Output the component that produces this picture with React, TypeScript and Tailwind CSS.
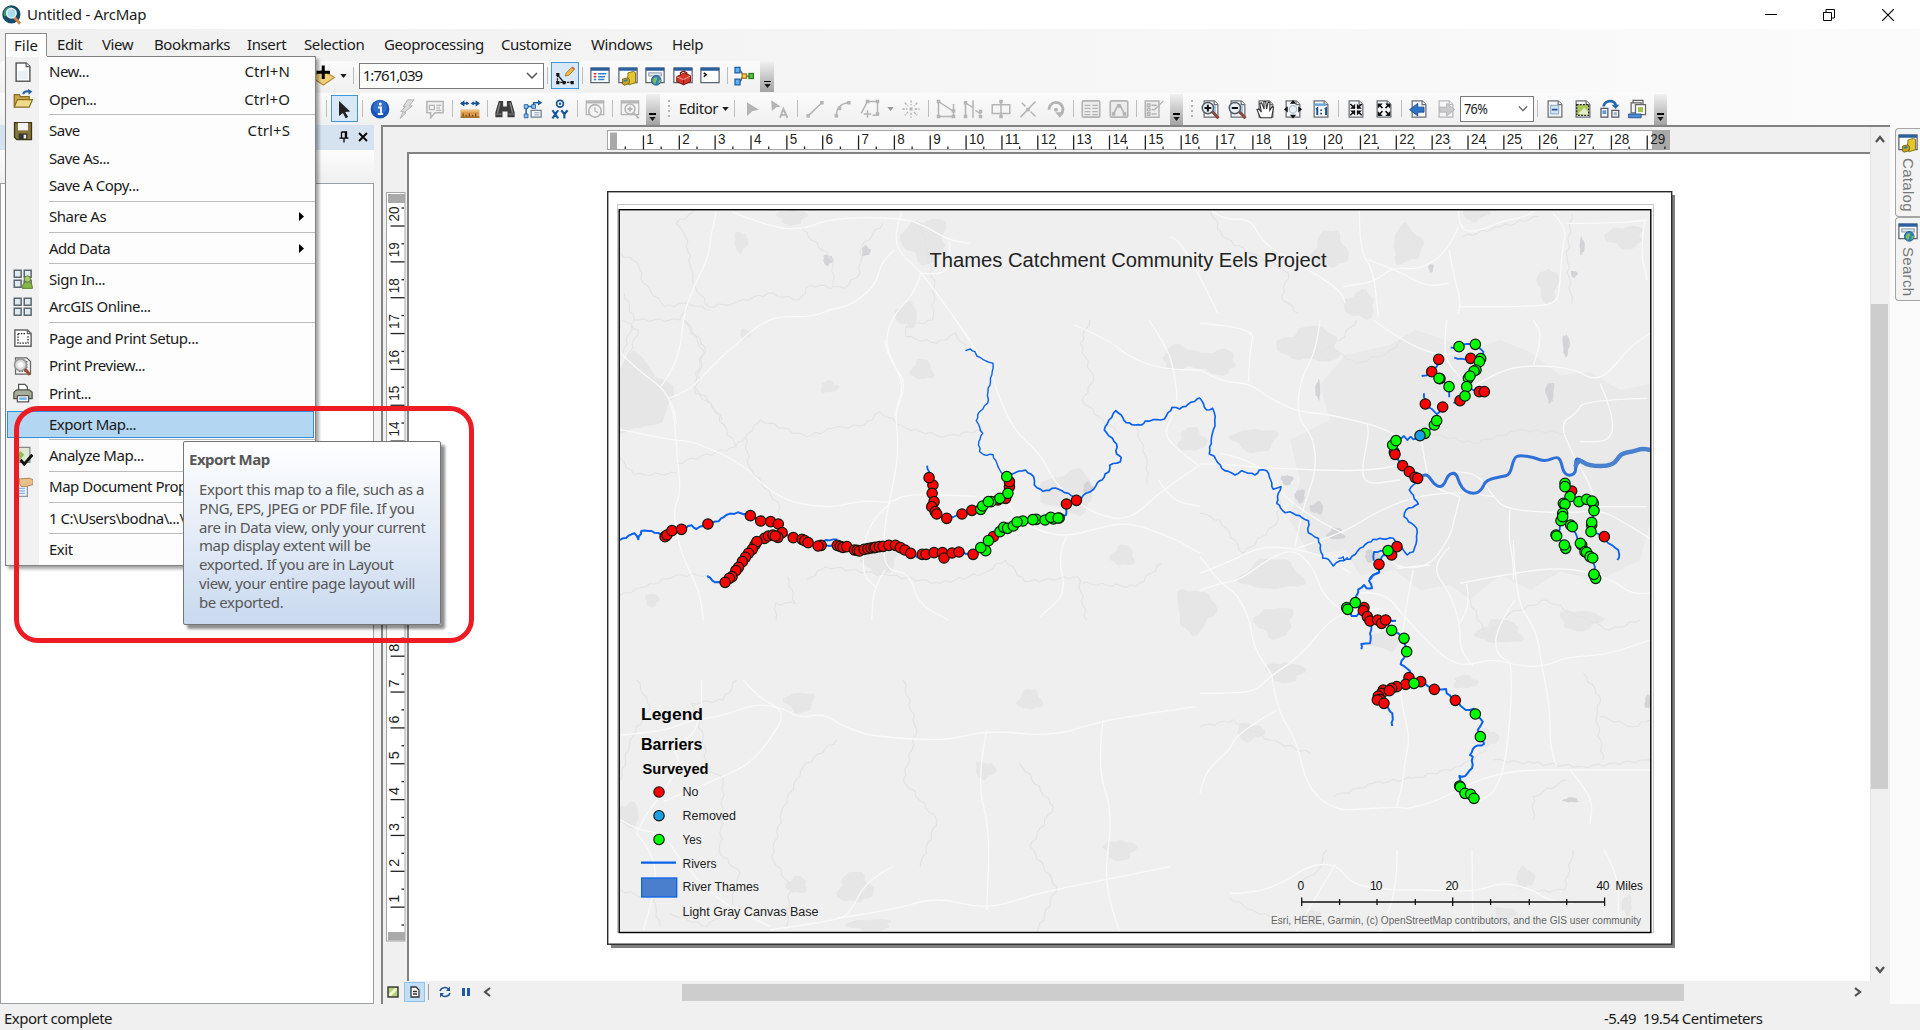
import React from "react";

type Kids = { children?: React.ReactNode };

/* ---------- small drawing helpers ---------- */

function Ic({ children, className = "" }: Kids & { className?: string }) {
  return (
    <svg viewBox="0 0 16 16" className={"h-5 w-5 shrink-0 " + className} fill="none" stroke="none">
      {children}
    </svg>
  );
}
const Slot = ({ children }: Kids) => <div className="flex h-7 w-[27.5px] shrink-0 items-center justify-center">{children}</div>;
const Hot = ({ children }: Kids) => (
  <div className="flex h-[27px] w-[27.5px] shrink-0 items-center justify-center border border-[#3f97dc] bg-[#d9e8f6]">{children}</div>
);
const Sep = () => (
  <div className="flex w-[7.7px] shrink-0 justify-center">
    <div className="h-[17px] w-px bg-[#bdbdbd]" />
  </div>
);
const Caret = ({ className = "" }: { className?: string }) => (
  <svg viewBox="0 0 8 5" className={"h-1 w-[7px] shrink-0 " + className}>
    <path d="M0 0h8L4 5z" fill="currentColor" />
  </svg>
);
const Chevron = ({ className = "" }: { className?: string }) => (
  <svg viewBox="0 0 12 7" className={"h-[7px] w-3 " + className} fill="none" stroke="#555" strokeWidth="1.500">
    <path d="M1 1l5 5 5-5" />
  </svg>
);
const Overflow = () => (
  <div className="ml-[2px] flex h-[31px] w-[13.5px] shrink-0 flex-col items-center justify-end self-end bg-linear-to-b from-[#f1f1f1] to-[#a3a3a3] pb-1">
    <div className="mb-[2px] h-[1.5px] w-[7px] bg-black" />
    <Caret />
  </div>
);
const Grip = () => (
  <div className="flex flex-col gap-[3px]">
    {[0, 1, 2, 3].map((i) => (
      <div key={i} className="h-[2px] w-[2px] bg-[#b5b5b5]" />
    ))}
  </div>
);

/* ---------- icons ---------- */

const Win = ({ children }: Kids) => (
  <>
    <rect x=".7" y="1.7" width="14.6" height="11.6" fill="#fff" stroke="#5c6470" />
    <rect x=".7" y="1.2" width="14.6" height="2.6" fill="#2c5f9e" />
    {children}
  </>
);
const Sheet = ({ children, faded = false }: Kids & { faded?: boolean }) => (
  <g opacity={faded ? 0.45 : 1}>
    <path d="M2.500 1.500h8l3 3v10h-11z" fill="#f4f6f8" stroke="#6b6f75" />
    <path d="M10.500 1.500v3h3" fill="#fff" stroke="#6b6f75" />
    {children}
  </g>
);
const G = "#b4b4b4";

const IAdd = () => (
  <Ic className="h-6 w-6">
    <path d="M0 9l7-5 8 5-7.500 5z" fill="#efcf7c" stroke="#b58c34" strokeWidth=".7" />
    <path d="M7.500 1v9M3 5.500h9" stroke="#000" strokeWidth="2" />
  </Ic>
);
const ISketch = () => (
  <Ic>
    <path d="M2 7v6h12" stroke="#222" strokeDasharray="2 .7" />
    <path d="M2 7l5 6" stroke="#222" />
    <path d="M1 5.500h2.500v2.500H1zM1 12h2.500v2.500H1zM6 12h2.500v2.500H6zM12.500 12H15v2.500h-2.500z" fill="#111" />
    <path d="M8 8l1-2.500L13.500 1l2 1.700L11 7.500z" fill="#f0b93f" stroke="#9a6a1c" strokeWidth=".6" />
    <path d="M13 1.500L14 .3l2 1.500-1 1.400z" fill="#d2695b" />
  </Ic>
);
const IToc = () => (
  <Ic>
    <Win>
      <path d="M3 6.200h2M3 8.500h2" stroke="#c33" strokeWidth="1.300" />
      <path d="M3 10.800h2" stroke="#2a8bd0" strokeWidth="1.300" />
      <path d="M6.500 6.200h6.500M6.500 8.500H12M6.500 10.800h5" stroke="#2f7fd0" strokeWidth="1.200" />
    </Win>
  </Ic>
);
const ICatalog = () => (
  <Ic>
    <Win />
    <path d="M8 5.500l4.500-1.200 1.500 1v8L9 15l-1.500-1z" fill="#e6c62e" stroke="#7b690d" strokeWidth=".7" />
    <path d="M3.500 10.500l4-1 1.500 1V14l-4 1.300-1.500-1z" fill="#c9aa1e" stroke="#6c5a08" strokeWidth=".7" />
    <path d="M4.500 12l3-.8" stroke="#3e7d9a" strokeWidth="1.500" />
  </Ic>
);
const ISearch = () => (
  <Ic>
    <Win>
      <rect x="3" y="5.500" width="10" height="2.500" fill="#dce7f4" stroke="#7b8ca3" strokeWidth=".7" />
    </Win>
    <circle cx="9" cy="11.500" r="3.900" fill="#2e83bb" stroke="#1b4c78" strokeWidth=".6" />
    <path d="M6.500 10.500c2-2.500 4-1.500 3 .2s-.5 3-1.500 3.500c-1.500-.8-2-2.200-1.500-3.700zM10.800 11.500l1.600-.8v2.200l-1.600 1z" fill="#7cc25a" />
  </Ic>
);
const IToolbox = () => (
  <Ic>
    <Win />
    <path d="M3 8.500l6-3 5 2.200v4.800L8.500 15 3 12.500z" fill="#d3362b" stroke="#7c130e" strokeWidth=".8" />
    <path d="M3 8.700l5.500 2.200L14 8" stroke="#f4a196" strokeWidth=".8" />
    <path d="M6 7V5.300l2.500-1.100L11 5.300v1.500" stroke="#7c130e" />
    <path d="M8.500 11v4" stroke="#7c130e" strokeWidth=".7" />
  </Ic>
);
const IPython = () => (
  <Ic>
    <Win>
      <path d="M3 5.500l2 1.500-2 1.500" stroke="#111" strokeWidth="1.200" />
    </Win>
  </Ic>
);
const IModel = () => (
  <Ic>
    <path d="M5 3.500l2.500 4L5 12.500M9 8h4" stroke="#555" />
    <path d="M.8 1h4v4.500h-4zM.8 10.500h4V15h-4z" fill="#5fb0f0" stroke="#1b5fa8" />
    <rect x="6.500" y="6.300" width="3.500" height="3.500" fill="#f3cf55" stroke="#9b7a17" />
    <rect x="12" y="6" width="3.500" height="4" fill="#5fc24c" stroke="#24791c" />
  </Ic>
);
const IPointer = ({ c = "#222" }: { c?: string }) => (
  <Ic>
    <path d="M4 1.500l9 8.500-4 .3 2.300 4-2 1-2.200-4.200L4 13.500z" fill={c} />
  </Ic>
);
const IInfo = () => (
  <Ic>
    <circle cx="8" cy="8" r="7.500" fill="#1b55b4" />
    <circle cx="8" cy="6.500" r="5.500" fill="#3b78cf" opacity=".7" />
    <path d="M6.500 6.800h2.300v4.700M6.200 12h4.300" stroke="#fff" strokeWidth="1.500" />
    <circle cx="8.200" cy="3.900" r="1.200" fill="#fff" />
  </Ic>
);
const IBolt = () => (
  <Ic>
    <path d="M8.500.7h5L9.800 5.500h2.400L5.500 11h1.700L2.500 15.500 5 10H3l3.700-4H5z" fill="#dcdcdc" stroke={G} strokeWidth=".8" />
  </Ic>
);
const ICallout = () => (
  <Ic>
    <path d="M1.500 2h13v9H8l-3.500 4v-4h-3z" fill="#f3f3f3" stroke={G} strokeWidth="1.200" />
    <path d="M3.500 5h4v3.500h-4zM9 5h4M9 7h3M9 9h4" stroke={G} />
  </Ic>
);
const IMeasure = () => (
  <Ic>
    <path d="M1 3.500h5.500M9.500 3.500H15" stroke="#17508f" strokeWidth="1.500" />
    <path d="M0 3.500L3.500 1v5zM16 3.500L12.500 1v5zM7.500 3.500L5 2v3zM8.500 3.500L11 2v3z" fill="#17508f" />
    <rect x=".5" y="8.500" width="15" height="6.500" fill="#d99b4d" />
    <path d="M.5 14.500h15" stroke="#8f5a1c" />
    <path d="M2.500 14v-2.500M5 14v-1.500M7.500 14v-2.500M10 14v-1.500M12.500 14v-2.500" stroke="#7a4a12" />
    <path d="M.5 9.500h15" stroke="#f2cd92" />
  </Ic>
);
const IBino = () => (
  <Ic>
    <path d="M3 1.500h3.500V6h3V1.500H13l2.700 9v4H10V10H6v4.500H.3v-4z" fill="#3c3c3c" />
    <path d="M4 3l-2 8M12 3l2 8" stroke="#8a8a8a" />
    <path d="M.8 12h4.500M10.700 12h4.500" stroke="#777" />
  </Ic>
);
const IRoute = () => (
  <Ic>
    <path d="M2.500 13V6h6V3h4" stroke="#1e5f9f" strokeWidth="1.200" />
    <path d="M12 .8L15.500 3 12 5.200z" fill="#1e5f9f" />
    <path d="M1 4.500h3v3H1zM1 12h3v3H1zM7 4.500h3v3H7z" fill="#8cc4ee" stroke="#1e5f9f" strokeWidth=".7" />
    <path d="M6.500 9h8v5.500h-8z" fill="#f5f7fa" stroke="#6e7f92" />
    <path d="M9 11h4M9 12.700h4" stroke="#8ea3ba" strokeWidth=".8" />
  </Ic>
);
const IXY = () => (
  <Ic>
    <circle cx="8" cy="3.700" r="2.700" stroke="#16559b" strokeWidth="1.400" fill="#fff" />
    <circle cx="8" cy="3.700" r="1" fill="#16559b" />
    <path d="M2 9l4.500 6.500M6.500 9L2 15.500M9 9l2.500 3.200L14 9M11.500 12v3.500" stroke="#16559b" strokeWidth="1.700" />
  </Ic>
);
const IGWin = ({ children }: Kids) => (
  <Ic>
    <path d="M1 1.500h14v11H1z" fill="#f4f4f4" stroke={G} />
    <path d="M1 2.700h14" stroke={G} strokeWidth="1.800" />
    {children}
  </Ic>
);
const ITime = () => (
  <IGWin>
    <circle cx="8" cy="9.500" r="5" fill="#f4f4f4" stroke={G} strokeWidth="1.300" />
    <path d="M8 6.500v3.200l2.500 1.200" stroke={G} />
  </IGWin>
);
const IViewer = () => (
  <IGWin>
    <circle cx="8" cy="8" r="4" fill="#f4f4f4" stroke={G} strokeWidth="1.200" />
    <path d="M8 6v4M6 8h4M11 11l4 4.500" stroke={G} strokeWidth="1.500" />
  </IGWin>
);
const INode = ({ d, pts }: { d: string; pts: number[][] }) => (
  <Ic>
    <path d={d} stroke={G} strokeWidth="1.200" />
    {pts.map(([x, y], i) => (
      <rect key={i} x={x - 1.4} y={y - 1.4} width="2.800" height="2.800" fill={G} />
    ))}
  </Ic>
);
const IArrowA = () => (
  <Ic>
    <path d="M1 1l7.500 5-3.500.5L1.500 9.500z" fill={G} />
    <path d="M8 15l2.700-7L14 15M9 12.700h4" stroke={G} strokeWidth="1.500" />
  </Ic>
);
const IStar = () => (
  <Ic>
    <path d="M8 1v4M8 11v4M1 8h4M11 8h4M3 3l2.700 2.700M10.300 10.300L13 13M13 3l-2.700 2.700M5.700 10.300L3 13" stroke={G} strokeDasharray="2 1" strokeWidth="1.100" />
    <rect x="6.800" y="6.800" width="2.400" height="2.400" fill={G} />
  </Ic>
);
const IRotate = () => (
  <Ic>
    <path d="M2.500 8.500a5.500 5.500 0 1 1 9 4" stroke={G} strokeWidth="2.200" />
    <path d="M7.500 10.500l7 0-3.500 4.500z" fill={G} />
    <circle cx="8" cy="8.500" r="1.600" fill={G} />
  </Ic>
);
const ITable = () => (
  <Ic>
    <rect x="1" y="1.500" width="14" height="13" rx="1" fill="#ededed" stroke={G} strokeWidth="1.300" />
    <path d="M3 5h4.500M3 7.500h4.500M3 10h4.500M3 12.500h4.500M9 5h4.500M9 7.500h4.500M9 10h4.500M9 12.500h4.500" stroke={G} />
  </Ic>
);
const IGraphBox = () => (
  <Ic>
    <rect x="1" y="1.500" width="14" height="13" rx="1" fill="#ededed" stroke={G} strokeWidth="1.300" />
    <path d="M3.500 12L7 5.500h2l3.500 6.500" stroke={G} strokeWidth="1.300" />
    <path d="M6.500 4h3v3h-3zM2.300 10.500h2.800v2.800H2.300zM11 10.500h2.800v2.800H11z" fill={G} />
  </Ic>
);
const IForm = () => (
  <Ic>
    <path d="M1 1.500h11v13H1z" fill="#ededed" stroke={G} strokeWidth="1.200" />
    <path d="M2.700 4h2v2h-2zM2.700 7.500h2v2h-2zM2.700 11h2v2h-2zM6 5h4M6 8.500h2.500M6 12h4M8 9l7.500-7.500" stroke={G} strokeWidth="1.100" />
  </Ic>
);
const ILens = ({ minus = false }: { minus?: boolean }) => (
  <Ic>
    <Sheet>
      <path d="M8 5h4v7H8z" fill="#a9cbe8" />
    </Sheet>
    <path d="M9 10l5 5.500" stroke="#8c4a3a" strokeWidth="2.400" />
    <circle cx="5.500" cy="7.200" r="4.500" fill="#e8eef3" stroke="#555b63" strokeWidth="1.200" />
    <path d={minus ? "M3 7.200h5" : "M2.800 7.200h5.400M5.500 4.500v5.400"} stroke="#111" strokeWidth="1.600" />
  </Ic>
);
const IHand = () => (
  <Ic>
    <Sheet />
    <path d="M3.500 15L.8 8.500l1.500-.5 2 2.500L3 3.500l1.500-.4L6.500 8 6.300 2h1.500L8.500 8l1.200-5.500 1.500.3L11 9l2-3 1 .6-1.500 8.400z" fill="#fff" stroke="#333" strokeWidth=".9" />
  </Ic>
);
const IExtent = () => (
  <Ic>
    <Sheet />
    <circle cx="8" cy="8.200" r="3" fill="#eaf1f7" stroke="#b9c4cf" />
    <path d="M8 .8l2.500 3h-5zM8 15.500l2.500-3h-5zM.8 8.200l3-2.500v5zM15.200 8.200l-3-2.500v5z" fill="#111" />
  </Ic>
);
const IOne = () => (
  <Ic>
    <Sheet />
    <path d="M3 4.500h9" stroke="#6ea6d8" strokeWidth="2" />
    <path d="M4 8.200l1-.7v5.300M11 8.200l1-.7v5.300" stroke="#174f86" strokeWidth="1.500" />
    <path d="M7.400 9h1.400M7.400 11.700h1.400" stroke="#174f86" strokeWidth="1.300" />
  </Ic>
);
const IFixed = ({ out = false }: { out?: boolean }) => (
  <Ic>
    <Sheet />
    {out ? (
      <>
        <path d="M4 4.500l2.800 2.800M12 4.500L9.200 7.300M4 12.500l2.800-2.800M12 12.500L9.200 9.700" stroke="#111" strokeWidth="1.200" />
        <path d="M3 3.500h4L3 7.500zM13 3.500v4l-4-4zM3 13.500v-4l4 4zM13 13.500H9l4-4z" fill="#111" />
      </>
    ) : (
      <>
        <path d="M3.500 4l3.500 3.500M12.500 4L9 7.500M3.500 13L7 9.500M12.500 13L9 9.500" stroke="#111" strokeWidth="1.200" />
        <path d="M7.300 7.800v-4l-4 4zM8.700 7.800h4l-4-4zM7.300 9.200h-4l4 4zM8.700 9.200v4l4-4z" fill="#111" />
      </>
    )}
  </Ic>
);
const IBack = () => (
  <Ic>
    <Sheet />
    <path d="M.5 8.500L7 3.500v3h5v4H7v3z" fill="#2f73c9" stroke="#184b93" strokeWidth=".7" />
  </Ic>
);
const IFwd = () => (
  <Ic>
    <Sheet faded />
    <path d="M15 8.500L8.500 3.500v3H3v4h5.500v3z" fill="#c9c9c9" stroke="#b0b0b0" strokeWidth=".7" />
  </Ic>
);
const IDraft = () => (
  <Ic>
    <Sheet>
      <path d="M4.500 5h6.500v7H4.500z" fill="#cfe0f0" stroke="#7fa3c5" strokeWidth=".7" />
      <path d="M5.500 8.500h4.500" stroke="#1e4f8a" strokeWidth="1.300" />
    </Sheet>
  </Ic>
);
const IFocus = () => (
  <Ic>
    <Sheet>
      <rect x="3" y="4.500" width="9.500" height="8.500" fill="#a9c85b" stroke="#222" strokeDasharray="1.500 1" />
      <path d="M4 12l5-5 3 3v2.500z" fill="#e7edca" />
    </Sheet>
  </Ic>
);
const ILayoutSwap = () => (
  <Ic>
    <path d="M3 6C3 1 12 0 12.500 5" stroke="#2268ae" strokeWidth="2.200" />
    <path d="M9.300 4.500h6.200L12.500 8z" fill="#2268ae" />
    <path d="M.8 7.500h5.500v7H.8zM9.500 9h5.500v5.500H9.500z" fill="#f4f6f8" stroke="#556" />
    <path d="M2 9h3v3H2z" fill="#5c9fd8" />
    <path d="M11 10.500h2.500V13H11z" fill="#9bb" />
  </Ic>
);
const IPages = () => (
  <Ic>
    <path d="M4 1h8v8H4z" fill="#eee" stroke="#666" />
    <path d="M2.500 3h8v8h-8z" fill="#f5f5f5" stroke="#666" />
    <path d="M6 4.500h8v8H6z" fill="#fff" stroke="#666" />
    <path d="M8 6.500h4v4H8z" fill="#9fc14e" />
    <path d="M.5 12h10v3H.5z" fill="#4b8ed4" stroke="#1d4f8e" strokeWidth=".7" />
  </Ic>
);

/* menu icons */
const MNew = () => (
  <Ic>
    <path d="M2.500.7h8l3 3v11.600h-11z" fill="#fff" stroke="#5e5e5e" strokeWidth="1.200" />
    <path d="M10.500.7v3h3" stroke="#5e5e5e" fill="#eef" />
    <path d="M4 7h8v7H4z" fill="#e9f0f7" />
  </Ic>
);
const MOpen = () => (
  <Ic>
    <path d="M1 14V4.500h4l1 1.500h7v3" fill="#c9a84a" stroke="#8a6d1f" />
    <path d="M1 14.500l2.500-6H15.500L13 14.500z" fill="#f0db8d" stroke="#8a6d1f" />
    <path d="M8 4c1-2 3-2.500 5-2" stroke="#2263a8" strokeWidth="1.500" />
    <path d="M12 0l3.500 2-3 2.500z" fill="#2263a8" />
  </Ic>
);
const MSave = () => (
  <Ic>
    <path d="M1.200 1.200h13.600v13.600H3L1.200 13z" fill="#85763a" stroke="#3d3515" />
    <path d="M4 1.500h8v6H4z" fill="#f3f3f3" />
    <path d="M4.500 10h7v4.500h-7z" fill="#333" />
    <path d="M8.500 11h2v3h-2z" fill="#eee" />
  </Ic>
);
const Tiles = () => (
  <path d="M1 1h5.500v5.500H1zM9 1h5.500v5.500H9zM1 9h5.500v5.500H1zM9 9h5.500v5.500H9z" fill="#dfe9f0" stroke="#5d6770" strokeWidth="1.200" />
);
const MSign = () => (
  <Ic>
    <Tiles />
    <path d="M7.500 15.500c0-4 1.500-5 4-5s4 1 4 5z" fill="#86b548" stroke="#54792a" strokeWidth=".7" />
    <circle cx="11.500" cy="8" r="2.500" fill="#a9cf68" stroke="#54792a" strokeWidth=".7" />
  </Ic>
);
const MOnline = () => (
  <Ic>
    <Tiles />
  </Ic>
);
const MPage = () => (
  <Ic>
    <path d="M1.500 1.500h10l3 3v10h-13z" fill="#fff" stroke="#666" strokeWidth="1.200" />
    <path d="M11.500 1.500v3h3" stroke="#666" />
    <path d="M4 4.500h6.500M4 4.500v7.500h8V6" stroke="#222" strokeDasharray="1.200 1" />
  </Ic>
);
const MPreview = () => (
  <Ic>
    <path d="M2 1.500h9l3 3v10H2z" fill="#f2f2f2" stroke="#666" />
    <path d="M11 4v8H4" stroke="#444" strokeDasharray="1.200 1" />
    <circle cx="6" cy="7" r="4.800" fill="#dcdcdc" stroke="#9a9a9a" strokeWidth="1.400" />
    <circle cx="6" cy="7" r="2.300" fill="#fafafa" />
    <path d="M9.500 10.500l4 4.500" stroke="#9c4b35" strokeWidth="2.500" />
  </Ic>
);
const MPrint = () => (
  <Ic>
    <path d="M4.500 6V1h5l2 2v3" fill="#fff" stroke="#555" />
    <path d="M.7 7.500L3 5.500h10l2.300 2v5H.7z" fill="#a9ae9b" stroke="#4b4f43" />
    <path d="M3.500 10h9v5h-9z" fill="#fff" stroke="#555" />
    <path d="M5 11.500h6v2H5z" fill="#6bb4e8" />
  </Ic>
);
const MAnalyze = () => (
  <Ic>
    <path d="M1.500 1h12v12h-12z" fill="#dfe9d3" stroke="#888" />
    <path d="M2 8l4-4 3 3-5 6H2z" fill="#8fbf5b" />
    <path d="M6 11l3 3.500L15.500 7" stroke="#111" strokeWidth="2.300" />
  </Ic>
);
const MProps = () => (
  <Ic>
    <path d="M1.500 3.500h10v12h-10z" fill="#eef3f8" stroke="#8a98a8" />
    <path d="M3.500 9h6M3.500 11h6M3.500 13h6" stroke="#7fb1dc" />
    <path d="M5 1.500l8-.5 3 1v4l-5 1.500H6.500L5 5z" fill="#e9c08a" stroke="#b08850" strokeWidth=".8" />
  </Ic>
);

/* ---------- file menu ---------- */

type Row = { t: string; k?: string; sub?: boolean; i?: React.ReactNode; hot?: boolean };
const menu: Row[][] = [
  [{ t: "New...", k: "Ctrl+N", i: <MNew /> }, { t: "Open...", k: "Ctrl+O", i: <MOpen /> }],
  [{ t: "Save", k: "Ctrl+S", i: <MSave /> }, { t: "Save As..." }, { t: "Save A Copy..." }],
  [{ t: "Share As", sub: true }],
  [{ t: "Add Data", sub: true }],
  [{ t: "Sign In...", i: <MSign /> }, { t: "ArcGIS Online...", i: <MOnline /> }],
  [{ t: "Page and Print Setup...", i: <MPage /> }, { t: "Print Preview...", i: <MPreview /> }, { t: "Print...", i: <MPrint /> }],
  [{ t: "Export Map...", hot: true }],
  [{ t: "Analyze Map...", i: <MAnalyze /> }],
  [{ t: "Map Document Prop", i: <MProps /> }],
  [{ t: "1 C:\\Users\\bodna\\...\\" }],
  [{ t: "Exit" }],
];

function FileMenu() {
  return (
    <div className="absolute top-14 left-[5px] h-[510px] w-[311px] border border-[#808080] bg-[linear-gradient(90deg,#f1f1f1_33px,#fdfdfd_33px)] pt-[1px] shadow-[3px_3px_3px_rgba(0,0,0,0.35)]">
      <div className="absolute -top-px left-0 h-px w-[41px] bg-[#fcfcfc]" />
      {menu.map((group, g) => (
        <React.Fragment key={g}>
          {g > 0 && (
            <div className="flex h-[3.75px] items-center pl-[43px]">
              <div className="h-px w-full bg-[#bcbcbc]" />
            </div>
          )}
          {group.map((r) => (
            <div key={r.t} className={"mx-[1px] flex h-[27.5px] items-center border " + (r.hot ? "border-[#2f8fdc] bg-[#b3d6f2]" : "border-transparent")}>
              <div className="flex w-[41px] shrink-0 pl-[5px]">{r.i}</div>
              <div className="grow text-[15px] leading-none tracking-[-0.48px] whitespace-nowrap">{r.t}</div>
              {r.k && <div className="pr-[23px] text-[15px] leading-none tracking-[0.1px]">{r.k}</div>}
              {r.sub && (
                <svg viewBox="0 0 5 9" className="mr-[9px] h-[9px] w-[5px]">
                  <path d="M0 0l5 4.500L0 9z" />
                </svg>
              )}
            </div>
          ))}
        </React.Fragment>
      ))}
    </div>
  );
}

/* ---------- map data ---------- */

type Tile = { ox: number; oy: number; sx: number; sy: number };
const west: Tile = { ox: 600, oy: 320, sx: 2.6133, sy: 3 };
const east: Tile = { ox: 1200, oy: 320, sx: 3, sy: 3 };
const south: Tile = { ox: 1200, oy: 540, sx: 3, sy: 3 };
const north: Tile = { ox: 370, oy: 120, sx: 2.6133, sy: 3 };
const northEast: Tile = { ox: 1180, oy: 50, sx: 2.119, sy: 3 };
const southWest: Tile = { ox: 370, oy: 680, sx: 3, sy: 3 };
const southEast: Tile = { ox: 1230, oy: 850, sx: 2.2725, sy: 3 };

const nums = (s: string) => s.trim().split(/[\s,]+/).map(Number);
function pts(s: string, m: Tile): [number, number][] {
  const n = nums(s);
  const out: [number, number][] = [];
  for (let i = 0; i + 1 < n.length; i += 2) out.push([m.ox + n[i] / m.sx, m.oy + n[i + 1] / m.sy]);
  return out;
}
function smooth(s: string, m: Tile) {
  const p = pts(s, m);
  let d = `M${p[0][0]} ${p[0][1]}`;
  for (let i = 1; i < p.length - 1; i++) {
    d += `Q${p[i][0]} ${p[i][1]} ${(p[i][0] + p[i + 1][0]) / 2} ${(p[i][1] + p[i + 1][1]) / 2}`;
  }
  const e = p[p.length - 1];
  return d + `L${e[0]} ${e[1]}`;
}
/* irregular town outline */
function blob(cx: number, cy: number, rx: number, ry: number, seed: number) {
  const out: string[] = [];
  const n = 26;
  for (let i = 0; i < n; i++) {
    const a = (i / n) * Math.PI * 2;
    const k = 0.84 + 0.13 * Math.sin(a * 3 + seed) + 0.08 * Math.sin(a * 5 + seed * 3) + 0.05 * Math.sin(i * 4.3 + seed);
    out.push((cx + Math.cos(a) * rx * k).toFixed(1) + "," + (cy + Math.sin(a) * ry * k).toFixed(1));
  }
  return out.join(" ");
}
/* subdivided line with small sideways steps */
function wiggle(s: string, m: Tile, step = 5, amp = 1.6) {
  const p = pts(s, m);
  const out: string[] = [];
  for (let i = 0; i < p.length - 1; i++) {
    const [x0, y0] = p[i];
    const [x1, y1] = p[i + 1];
    const len = Math.hypot(x1 - x0, y1 - y0) || 1;
    const n = Math.max(1, Math.round(len / step));
    for (let j = 0; j < n; j++) {
      const t = j / n;
      const o = j === 0 ? 0 : Math.sin(x0 * 3.3 + j * 2.1 + i) * amp;
      out.push((x0 + (x1 - x0) * t - ((y1 - y0) / len) * o).toFixed(1) + "," + (y0 + (y1 - y0) * t + ((x1 - x0) / len) * o).toFixed(1));
    }
  }
  const e = p[p.length - 1];
  out.push(e[0].toFixed(1) + "," + e[1].toFixed(1));
  return out.join(" ");
}

const roads: [Tile, string][] = [
  [north, "905 275 890 350 885 410 850 490 820 580 812 680 790 750 760 800"],
  [north, "655 700 700 750 760 800 780 835 797 870 800 910"],
  [north, "780 835 835 815 890 740 950 680 1010 620 1060 590 1160 590 1200 568 1250 560 1320 500 1335 430 1370 390"],
  [north, "945 275 1040 320 1130 330 1200 295 1370 292 1440 310 1510 360 1568 370"],
  [north, "1390 275 1375 320 1375 390 1440 455 1500 550 1568 660"],
  [north, "1440 455 1430 510 1370 580 1345 660 1370 740 1402 790 1370 890"],
  [north, "1440 460 1490 465 1515 440 1515 365"],
  [west, "180 240 195 280 200 400 212 520 190 570 210 700 260 810 270 900"],
  [west, "52 328 190 362 240 362 370 430 420 490 490 545 600 565 690 540 760 550 800 520 1000 530"],
  [west, "745 60 745 90 797 190 770 270 782 400 755 550 740 650 745 750 810 760 830 850 910 900"],
  [west, "745 750 715 800 710 900"],
  [west, "760 550 700 600 682 760 720 800"],
  [west, "930 0 975 80 1028 160 1032 200 1080 330 1150 400 1190 490 1230 530 1290 580 1380 605 1460 520 1560 440"],
  [west, "1060 530 1080 590 1150 635 1220 650 1300 625 1380 605 1500 655 1568 700"],
  [west, "1220 650 1195 700 1220 820 1150 890"],
  [west, "1240 15 1330 60 1380 110 1470 148 1568 150"],
  [west, "1435 0 1480 80 1500 148 1512 260 1475 330 1490 370 1568 440"],
  [west, "1460 480 1490 540 1568 560"],
  [east, "0 150 60 185 150 190 200 230 290 275 370 280 500 310 560 330 610 360"],
  [east, "0 10 165 20 150 90 145 185"],
  [east, "360 0 350 90 300 180 290 290 340 350 350 450 310 560 285 680"],
  [east, "740 0 730 90 750 140 790 180"],
  [east, "520 0 600 60 720 110 800 90"],
  [east, "820 200 900 150 1000 135 1120 145 1200 190 1290 80 1350 40"],
  [east, "1000 135 1030 50 1000 0"],
  [east, "1200 190 1240 280 1235 365 1140 365"],
  [east, "1340 235 1150 240 1130 280 1080 310 1115 400 1170 490 1200 590"],
  [east, "0 432 60 430 200 445 500 455 620 430"],
  [east, "60 400 170 420 250 530 360 605 430 640"],
  [east, "500 310 510 330 485 440 495 495 600 480"],
  [east, "290 685 430 640 520 580 640 530 780 515 880 530"],
  [east, "660 330 670 400 690 500 780 530"],
  [east, "740 460 820 445 880 530 920 570 1100 580 1200 570 1260 600 1350 655"],
  [east, "1170 560 1340 560"],
  [east, "0 760 100 720 180 680 290 685 400 720 450 760"],
  [east, "780 530 760 610 750 650 690 740 590 745 560 700"],
  [east, "930 570 925 650 940 720 940 780"],
  [south, "0 150 60 130 120 120 200 60 280 25 340 80 370 170 440 220"],
  [south, "0 50 60 130 110 160 150 240 160 320 215 405"],
  [south, "0 460 115 460 170 450 215 405 300 350 380 250 440 215 550 205"],
  [south, "215 405 230 510 290 600 320 740 400 810 480 808 600 800 620 808 720 780 830 720 950 690 1100 690 1350 690"],
  [south, "230 510 110 580 90 630 20 690 0 760"],
  [south, "470 160 550 150 620 240 680 300 740 360 800 378 880 355 960 380 1040 378 1100 350 1220 345 1350 300"],
  [south, "640 90 610 240 600 380 605 500 630 590 615 660 610 720 590 800"],
  [south, "750 20 690 75 750 160 780 250 780 330 820 380"],
  [south, "690 75 590 85"],
  [south, "930 370 940 430 910 740 820 795"],
  [south, "940 0 945 180 1010 270 1025 378 1050 500 1050 620 1070 680"],
  [south, "945 180 890 260 885 340 935 370"],
  [south, "780 130 930 100 1100 80 1240 120 1290 160 1350 160"],
  [south, "800 130 810 190 780 250"],
  [south, "1110 690 1180 770 1170 850"],
  [northEast, "-20 560 0 570 50 700 80 790"],
  [northEast, "65 480 90 510 150 505 175 580 250 640 340 720 350 760"],
  [northEast, "380 480 380 600 410 660 420 800"],
  [northEast, "590 480 590 530 620 550 690 510 720 505 750 485"],
  [northEast, "590 530 570 600 510 660 450 650 415 695 345 710"],
  [northEast, "400 630 460 660 520 710 570 700"],
  [northEast, "570 600 580 680 595 750 590 790"],
  [northEast, "790 490 820 530 810 600 805 700 800 760 740 770 590 770"],
  [northEast, "820 520 920 520 990 510"],
  [northEast, "985 510 975 600 990 690"],
  [southWest, "752 165 880 155 960 120 1050 110 1160 70 1240 85 1290 115 1360 100 1420 140 1500 165"],
  [southWest, "1120 0 1160 50 1250 95 1200 180 1140 250 1060 290 960 330 880 365"],
  [southWest, "995 0 1000 150 900 200 935 240 885 330 830 400 800 460"],
  [southWest, "752 420 800 450 880 460 930 540 1040 660 1200 740"],
  [southWest, "800 460 860 530 850 650 820 750"],
  [southWest, "1568 560 1490 600 1440 700 1400 720 1200 750"],
  [southWest, "1400 715 1568 690 1700 650 1850 690 2000 640 2200 600 2400 560"],
  [southWest, "1500 165 1700 190 1850 150 2050 170 2200 120 2480 80"],
  [southWest, "1850 150 1820 300 1860 450 1850 690"],
  [southWest, "2200 120 2180 260 2230 400 2200 600 2250 760"],
  [southEast, "0 130 50 130 120 100 180 45 240 42 270 90 300 110 380 120"],
  [southEast, "240 42 200 130 150 245"],
  [southEast, "380 0 380 120 340 245"],
  [southEast, "380 120 470 120 560 125 620 95 690 120 720 150 780 160"],
  [southEast, "550 0 552 245"],
  [southEast, "850 0 885 80 880 200 900 240"],
];

const bounds: [Tile, string][] = [
  [north, "845 275 800 310 825 350 840 450 850 500 885 560 950 550 1040 520 1120 540 1150 495 1240 505 1280 460 1285 380 1340 310"],
  [north, "655 400 700 430 715 490 770 560 830 550 890 570"],
  [north, "665 520 690 600 810 600 830 560"],
  [north, "690 600 660 700"],
  [north, "820 600 875 680 850 820 890 850 920 900"],
  [north, "1130 330 1210 420 1210 500"],
  [north, "1440 310 1475 500 1470 600 1400 620 1400 650 1480 670 1530 640 1560 690"],
  [west, "60 0 100 30 60 150"],
  [west, "220 0 270 90 245 200 290 250 355 380 200 430"],
  [west, "355 380 380 350 420 300 540 350 610 325 690 315 730 275 800 325 900 350 1000 330"],
  [west, "380 350 390 440 470 560 470 640"],
  [west, "52 415 90 465 200 460"],
  [west, "52 825 120 800 200 765 280 765"],
  [west, "490 770 510 850 460 850 460 900"],
  [west, "540 780 590 740 750 765 890 790 1000 760 1060 720 1110 785 1250 770 1270 900"],
  [west, "1280 0 1255 70 1290 180 1260 240 1320 310 1360 340"],
  [west, "1400 320 1430 420 1430 490"],
  [west, "1260 790 1400 800 1468 730"],
  [east, "0 580 60 600 130 700 230 610 240 540"],
  [east, "400 90 470 130 560 100 610 60"],
  [east, "360 100 420 60 470 0"],
  [east, "690 340 820 370 960 330 1100 340"],
  [south, "800 160 860 290 930 220 1040 180 1120 220 1230 270 1320 240"],
  [south, "0 560 100 540 210 600 330 640"],
  [south, "400 770 520 730 640 715 780 680 860 630"],
  [south, "1150 400 1200 470 1190 530 1210 660"],
  [south, "1200 530 1300 560 1350 540"],
  [south, "880 660 1000 670 1150 680 1350 660"],
  [south, "1100 720 1000 770 1000 840"],
  [northEast, "65 480 90 560 150 610 200 640 230 670 215 740 250 790"],
  [northEast, "600 560 680 530 760 500"],
  [northEast, "830 490 820 620 830 760"],
  [southWest, "800 0 840 80 780 180 752 300"],
  [southWest, "1100 0 1060 60 965 70 1000 170 1010 260 1060 300 1050 520 1110 580 1080 680 1010 740 900 700"],
  [southWest, "1400 180 1300 260 1240 380 1205 530 1260 620 1250 740"],
  [southWest, "752 630 850 660 870 740"],
  [southWest, "1600 0 1640 150 1600 300 1700 420 1650 560"],
  [southWest, "1950 250 2050 380 1980 500 2060 620 2000 760"],
  [southEast, "0 145 50 180 90 200"],
  [southEast, "220 0 200 60 160 100"],
  [southEast, "780 0 760 120 690 125"],
];

/* cx cy rx ry seed */
const towns: number[][] = [
  [638, 396, 36, 44, 1], [741, 242, 8, 12, 2], [792, 217, 17, 9, 3], [925, 240, 26, 26, 4], [907, 315, 13, 14, 5], [922, 370, 13, 12, 6],
  [829, 387, 10, 7, 7], [745, 334, 6, 6, 8], [652, 600, 8, 8, 9], [880, 562, 20, 14, 10], [1068, 492, 32, 24, 11], [1123, 556, 14, 12, 12],
  [1192, 440, 16, 14, 13], [1182, 358, 24, 14, 14], [1195, 610, 22, 26, 15], [1255, 440, 26, 14, 16], [1215, 362, 26, 14, 17], [1310, 345, 36, 20, 18],
  [1330, 250, 20, 22, 19], [1407, 245, 17, 22, 20], [1475, 212, 16, 10, 21], [1548, 285, 12, 20, 22], [1625, 237, 22, 13, 23], [1360, 305, 18, 16, 24],
  [1272, 575, 36, 18, 25], [1250, 732, 16, 10, 27], [1285, 672, 22, 12, 28], [1275, 622, 22, 18, 29], [1385, 640, 18, 12, 30],
  [1500, 632, 26, 14, 31], [1465, 682, 14, 8, 32], [1488, 738, 12, 10, 33], [1580, 620, 24, 12, 34], [800, 702, 17, 12, 35], [628, 815, 14, 14, 36],
  [797, 885, 12, 10, 37], [855, 888, 20, 18, 38], [1525, 878, 11, 12, 39], [1505, 914, 13, 8, 40], [1312, 918, 10, 10, 41], [1627, 905, 6, 12, 42],
  [1030, 700, 14, 12, 44], [985, 770, 12, 10, 46], [1120, 850, 18, 12, 47], [870, 925, 26, 7, 48],
];
const lakes: number[][] = [
  [866, 251, 5, 6, 1], [828, 260, 6, 6, 2], [1287, 480, 7, 6, 3], [1300, 496, 6, 8, 4], [1317, 508, 8, 7, 5], [1336, 534, 10, 7, 6], [1088, 488, 6, 7, 7], [1372, 556, 9, 7, 8],
  [1566, 345, 4, 13, 9], [1550, 392, 5, 12, 10], [1318, 390, 3, 11, 11], [1571, 800, 9, 3, 12], [1648, 702, 4, 8, 13], [1582, 246, 3, 10, 14], [1574, 274, 4, 4, 15], [1431, 268, 3, 5, 16],
];

const rivers: [Tile, string, number][] = [
  [west, "955 92 968 87 980 95 985 108 1000 118 1027 130 1024 165 1014 215 1013 250 992 275 983 302 1000 340 990 365 992 395 1003 404 1027 404 1040 440 1050 460 1062 468", 1.4],
  [west, "1062 465 1085 458 1112 450 1133 470 1135 495 1158 514 1190 504 1215 518 1240 530 1258 535 1270 520 1290 508 1300 488 1312 480 1320 462 1330 455 1332 436 1360 425 1362 412 1350 402 1350 372 1318 330 1330 300 1348 272 1362 285 1375 308 1398 315 1415 315 1425 303 1475 297 1495 262 1515 267 1568 233", 1.7],
  [west, "52 660 90 640 100 658 108 633 135 633 160 643 172 648 188 632 212 628 240 616 252 627 280 612 310 604 330 585 360 577 392 585 420 603 446 605 466 612 476 638 505 653 530 658 545 668 575 676 620 676 680 692 770 676 812 700 830 712 870 703 900 700 938 696 975 703 995 683 1015 662 1040 640 1090 606 1130 598 1205 594 1218 585 1220 552 1245 540", 2],
  [west, "280 768 300 787 327 787 355 752 380 712 410 665 455 647 476 638", 2],
  [west, "572 670 590 660 620 658", 1.8],
  [west, "855 437 860 455 860 473 870 495 868 520 873 545 870 562 880 582 906 595 946 582 972 573 1000 552 1060 535 1068 490 1062 468", 1.8],
  [east, "0 235 20 270 38 265 46 290 45 318 35 350 28 402 42 408 65 445 105 465 125 452 165 465 178 450 200 452 212 480 220 508 243 500 235 520 230 550 255 578 270 575 325 602 325 638 355 655 368 715 385 718 400 738 420 722 450 718 480 685 520 658 580 655 610 690 622 705 640 695 650 660 650 625 612 590 618 570 655 552 628 510 640 495 655 478", 1.6],
  [east, "415 715 430 710 432 722 443 712", 1.3],
  [east, "752 83 777 80 800 72 826 73 850 95 848 118 825 152 805 172 800 200 795 228 780 245 760 248", 1.8],
  [east, "763 113 785 116 812 116", 1.8],
  [east, "665 168 680 166 695 155 710 140 717 118", 1.8],
  [east, "695 155 717 175 747 200 748 232", 1.8],
  [east, "672 220 677 252 710 282 729 262", 1.8],
  [east, "710 282 710 300 700 315 675 342 660 348 640 358 632 350 622 360 612 348 602 356 588 362 578 375 585 402 608 437 628 455 655 475", 1.8],
  [east, "800 205 835 215 853 215", 1.8],
  [east, "1095 478 1095 500 1110 530 1140 545 1160 538 1180 543 1182 572 1175 607 1175 635 1213 650 1225 670 1255 690 1258 705 1252 720", 1.8],
  [east, "1110 530 1095 553 1088 590 1115 618 1140 670 1160 695 1180 713 1185 760 1188 780", 1.8],
  [east, "1088 600 1070 647 1095 675", 1.8],
  [east, "592 682 575 710 550 705 537 733 538 758 520 765 508 778", 1.9],
  [east, "562 692 522 696 521 722", 1.8],
  [south, "537 72 536 98 520 104 507 122 516 145 500 145 492 135 475 148 466 188 443 207 455 228 470 228 490 210 502 232 512 245 545 245 558 240 588 242", 2],
  [south, "514 250 510 310 484 312 484 328", 1.9],
  [south, "558 242 575 270 612 293 620 335 602 373 630 393 628 415 642 430 662 425 703 448 738 447 740 460 767 482 797 510 822 506 826 522 848 545 833 570 850 590 852 612 825 620 810 645 818 650 816 685 796 708 778 708 781 740 822 772", 2],
  [south, "642 430 590 440 545 455 535 475 552 490 565 505 577 520 577 558", 2],
];

const thames =
  "655 475 670 464 685 466 700 490 720 503 735 490 745 463 768 458 778 490 795 515 825 522 845 510 858 480 905 470 930 465 942 412 960 406 1000 412 1035 425 1070 410 1082 420 1090 455 1105 468 1128 460 1126 420 1135 415 1165 438 1240 438 1262 400 1300 395 1325 385 1350 390";

const red: [Tile, string][] = [
  [west, "170 650 175 645 188 632 213 628 282 612 393 587 420 603 446 605 466 612 476 638 505 653 528 658 535 662 544 668 578 676 570 678 620 676 628 679 635 682 645 680 665 690 672 691 678 693 690 688 700 686 708 684 716 683 720 682 730 680 740 679 755 676 772 676 785 683 797 690 812 700 842 703 852 703 873 698 895 698 899 714 920 699 938 696 975 703"],
  [west, "465 652 430 655 440 648 452 645 458 648 405 675 410 665 398 688 388 700 380 712 372 725 362 742 355 752 345 770 338 775 327 787"],
  [west, "870 495 860 473 868 520 873 545 867 560 876 575 880 582 906 595 946 582 972 571 1040 540 1060 535 1070 500 1070 485 1028 650 1219 552 1245 541"],
  [east, "716 118 695 155 812 115 838 215 853 215 720 176 676 252 728 261 780 242 583 397 585 403 608 437 628 455 645 472 653 475 575 705 591 680 537 733 1115 513 1213 650"],
  [south, "492 203 490 212 502 230 510 243 533 240 545 250 557 240 627 413 617 433 662 425 590 440 575 445 550 450 545 460 535 468 540 478 532 480 552 490 568 452 703 448 766 481"],
];
const green: [Tile, string][] = [
  [west, "995 568 1000 558 1022 545 1015 545 1045 535 1066 520 1063 470 1008 692 995 683 1015 662 1045 635 1055 622 1065 625 1080 618 1105 603 1090 606 1140 598 1131 599 1163 600 1185 597 1200 594 1178 592 1197 594"],
  [east, "777 80 826 73 842 116 838 125 828 150 822 153 805 175 810 168 800 200 795 228 717 175 747 200 703 315 710 302 675 340 578 375 588 362 564 692"],
  [east, "1095 490 1095 500 1110 530 1090 550 1095 553 1088 580 1083 602 1088 590 1112 615 1117 620 1068 645 1070 648 1097 685 1093 675 1145 675 1141 670 1155 695 1160 697 1170 710 1178 714 1182 765 1137 545 1160 538 1180 550 1176 543 1182 572 1175 615 1175 607 1173 635"],
  [south, "440 203 443 208 466 188 575 271 612 295 620 335 642 430 826 522 841 590 779 738 781 741 795 760 812 763 822 775 1187 115 1182 103"],
];
const blue: [Tile, string][] = [[east, "660 347"]];

const Dots = ({ data, fill }: { data: [Tile, string][]; fill: string }) => (
  <g fill={fill} stroke="#0c1a10" strokeWidth="1.200">
    {data.flatMap(([m, s], k) => pts(s, m).map(([x, y], i) => <circle key={k + "-" + i} cx={x} cy={y} r="5.200" />))}
  </g>
);

function MapPage() {
  const ticks = [1339.6, 1377, 1415.3, 1490.6, 1529.3, 1566.7];
  return (
    <svg viewBox="607 191 1070 760" className="h-[760px] w-[1070px] shrink-0 font-['Liberation_Sans',sans-serif]">
      <defs>
        <clipPath id="frame">
          <rect x="619" y="209" width="1032" height="724" />
        </clipPath>
      </defs>
      <rect x="611" y="195" width="1064" height="753" fill="#7f7f7f" />
      <rect x="607.7" y="191.700" width="1064" height="752.500" fill="#fff" stroke="#2a2a2a" strokeWidth="1.400" />
      <rect x="617.500" y="204.500" width="1036" height="728" fill="none" stroke="#8a8a8a" strokeDasharray="1 1" />
      <g clipPath="url(#frame)">
        <rect x="619" y="209" width="1032" height="724" fill="#efefef" />
        <polygon fill="#e9e9e9" points="1345,355 1390,345 1415,330 1440,338 1470,350 1500,340 1530,352 1560,375 1590,372 1620,390 1651,384 1651,520 1640,560 1600,580 1560,572 1530,590 1500,575 1470,600 1450,585 1420,590 1395,570 1360,575 1345,550 1310,555 1290,520 1300,480 1290,440 1330,420 1320,385" />
        <g fill="#e6e6e6">
          {towns.map((t) => (
            <polygon key={t[4]} points={blob(t[0], t[1], t[2], t[3], t[4])} />
          ))}
        </g>
        <g fill="#d3d3d8">
          {lakes.map((t) => (
            <polygon key={t[4]} points={blob(t[0], t[1], t[2], t[3], t[4])} />
          ))}
        </g>
        <g fill="none" stroke="#e3e3e3" strokeWidth="1.100">
          {bounds.map(([m, s], i) => (
            <polyline key={i} points={wiggle(s, m)} />
          ))}
        </g>
        <g fill="none" stroke="#f9f9f9" strokeWidth="1.300">
          {roads.map(([m, s], i) => (
            <path key={i} d={smooth(s, m)} />
          ))}
        </g>
        <g fill="none" stroke="#0a62ea" strokeLinejoin="round">
          {rivers.map(([m, s, w], i) => (
            <polyline key={i} points={wiggle(s, m, 3.5, 0.7)} strokeWidth={w} />
          ))}
          <path d={smooth(thames, east)} strokeWidth="3" stroke="#2f70d8" />
          <path d={smooth("1126 440 1135 415 1165 438 1240 438 1262 400 1300 395 1325 385 1350 390", east)} strokeWidth="4.500" stroke="#4a80d0" />
        </g>
        <Dots data={red} fill="#fe0000" />
        <Dots data={green} fill="#00fe00" />
        <Dots data={blue} fill="#1a9fe0" />
      </g>
      <rect x="619.200" y="209.700" width="1031.600" height="722.800" fill="none" stroke="#000" strokeWidth="1.400" />

      <text x="929.500" y="266.500" fontSize="20.500" textLength="397" lengthAdjust="spacingAndGlyphs" fill="#222">Thames Catchment Community Eels Project</text>

      <g fontWeight="bold">
        <text x="641" y="719.500" fontSize="17" textLength="62" lengthAdjust="spacingAndGlyphs">Legend</text>
        <text x="641" y="750" fontSize="16.500" textLength="61.500" lengthAdjust="spacingAndGlyphs">Barriers</text>
        <text x="642.500" y="774.300" fontSize="15" textLength="66" lengthAdjust="spacingAndGlyphs">Surveyed</text>
      </g>
      <g stroke="#111" strokeWidth="1.100">
        <circle cx="659" cy="792" r="5.200" fill="#fe0000" />
        <circle cx="659" cy="815.700" r="5.200" fill="#1a9fe0" />
        <circle cx="659" cy="839.500" r="5.200" fill="#00fe00" />
      </g>
      <path d="M641 862.600h35" stroke="#0a62ea" strokeWidth="2.200" />
      <rect x="641.700" y="878" width="35" height="19" fill="#4a7fce" stroke="#0a62ea" strokeWidth="1.300" />
      <g fontSize="12.500" fill="#222">
        <text x="682.500" y="796.300" textLength="16" lengthAdjust="spacingAndGlyphs">No</text>
        <text x="682.500" y="820" textLength="53.500" lengthAdjust="spacingAndGlyphs">Removed</text>
        <text x="682.500" y="844" textLength="19" lengthAdjust="spacingAndGlyphs">Yes</text>
        <text x="682.500" y="867.500" textLength="34" lengthAdjust="spacingAndGlyphs">Rivers</text>
        <text x="682.500" y="891.300" textLength="76.500" lengthAdjust="spacingAndGlyphs">River Thames</text>
        <text x="682.500" y="916" textLength="136" lengthAdjust="spacingAndGlyphs">Light Gray Canvas Base</text>
      </g>

      <g stroke="#111" strokeWidth="1.300">
        <path d="M1301.700 902h303M1301.700 897.500v8.500M1452.700 897.500v8.500M1604.600 897.500v8.500" fill="none" />
        {ticks.map((t) => (
          <path key={t} d={`M${t} 899v6`} />
        ))}
      </g>
      <g fontSize="12" fill="#111">
        <text x="1297.500" y="890">0</text>
        <text x="1370" y="890" textLength="12.500">10</text>
        <text x="1445.500" y="890" textLength="13">20</text>
        <text x="1596.500" y="890" textLength="13">40</text>
        <text x="1615.500" y="890" textLength="27.500" lengthAdjust="spacingAndGlyphs">Miles</text>
      </g>
      <text x="1271" y="924" fontSize="10" textLength="370" lengthAdjust="spacingAndGlyphs" fill="#666">Esri, HERE, Garmin, (c) OpenStreetMap contributors, and the GIS user community</text>
    </svg>
  );
}

/* ---------- rulers ---------- */

const STEP = 35.85;
function RulerH() {
  return (
    <svg viewBox="0 0 1063 20" className="h-5 w-[1063px] font-['Liberation_Sans',sans-serif]">
      <rect x=".5" y=".5" width="1062" height="19" fill="#fff" stroke="#a6a6a6" />
      <rect x="3" y="2.500" width="7" height="16.500" fill="#a9a9a9" />
      <rect x="1045" y="1" width="18" height="18" fill="#a9a9a9" />
      {Array.from({ length: 30 }, (_, i) => (
        <g key={i}>
          {i > 0 && <path d={`M${0.6 + i * STEP} 5.500v14`} stroke="#222" strokeWidth="1.300" />}
          <path d={`M${18.3 + i * STEP} 16.500v2.500`} stroke="#222" strokeWidth="1.300" />
          {i > 0 && (
            <text x={3.500 + i * STEP} y="14" fontSize="15.500" textLength={i > 9 ? 15 : 7.500} lengthAdjust="spacingAndGlyphs" fill="#222">
              {i}
            </text>
          )}
        </g>
      ))}
    </svg>
  );
}
function RulerV() {
  return (
    <svg viewBox="0 0 20 750" className="h-[750px] w-5 font-['Liberation_Sans',sans-serif]">
      <rect x=".5" y=".5" width="18.500" height="748.500" fill="#fff" stroke="#a6a6a6" />
      <rect x="2" y="2" width="17" height="9" fill="#a9a9a9" />
      <rect x="2" y="740" width="17" height="8.500" fill="#a9a9a9" />
      {Array.from({ length: 21 }, (_, i) => {
        const y = 751 - i * STEP;
        return (
          <g key={i}>
            {i > 0 && <path d={`M4.500 ${y}h14`} stroke="#222" strokeWidth="1.300" />}
            <path d={`M15.500 ${y - 18}h2.500`} stroke="#222" strokeWidth="1.300" />
            {i > 0 && (
              <text transform={`translate(13 ${y - 4.500}) rotate(-90)`} fontSize="15.500" textLength={i > 9 ? 15 : 8} lengthAdjust="spacingAndGlyphs" fill="#222">
                {i}
              </text>
            )}
          </g>
        );
      })}
    </svg>
  );
}

/* ---------- chrome ---------- */

const menus: [string, string][] = [
  ["Edit", "w-[45px]"],
  ["View", "w-[52px]"],
  ["Bookmarks", "w-[93px]"],
  ["Insert", "w-[57px]"],
  ["Selection", "w-[80px]"],
  ["Geoprocessing", "w-[117px]"],
  ["Customize", "w-[90px]"],
  ["Windows", "w-[81px]"],
  ["Help", "w-[60px]"],
];

function TitleBar() {
  return (
    <div className="flex h-[29px] shrink-0 items-center bg-white pl-[2px]">
      <Ic>
        <circle cx="7.500" cy="7.500" r="7.300" fill="#164a6b" />
        <path d="M2 4c2-3 5-3 6-2S5 5 5 7s-3 3-4 1z" fill="#3f8f6a" />
        <path d="M9 9l5.500 6" stroke="#c98545" strokeWidth="2.200" />
        <circle cx="7.500" cy="6.500" r="3.800" fill="#a8dcea" stroke="#e8f4f7" strokeWidth="1.200" />
      </Ic>
      <div className="ml-[5px] pb-[1px] text-[15px] tracking-[-0.22px]">Untitled - ArcMap</div>
      <div className="grow" />
      <div className="h-px w-3 bg-black" />
      <svg viewBox="0 0 12 12" className="ml-[46px] h-3 w-3" fill="none" stroke="#000">
        <path d="M.5 3.500h8v8h-8zM3 3V.500h8.500V9H9" />
      </svg>
      <svg viewBox="0 0 12 12" className="mr-[26px] ml-[47px] h-3 w-3" fill="none" stroke="#000" strokeWidth="1.200">
        <path d="M0 0l12 12M12 0L0 12" />
      </svg>
    </div>
  );
}

function MenuBar() {
  return (
    <div className="flex h-[32px] shrink-0 items-center pl-[5px] text-[15px] tracking-[-0.4px]">
      <div className="mr-[10px] flex h-6 w-[42px] items-center justify-center border border-b-0 border-[#8a8a8a] bg-white pb-[1px] tracking-normal">File</div>
      {menus.map(([t, w]) => (
        <div key={t} className={"shrink-0 pb-[2px] " + w}>
          {t}
        </div>
      ))}
    </div>
  );
}

function ToolRow1() {
  return (
    <div className="flex h-[31px] shrink-0 items-center">
      <div className="flex h-full items-center rounded-sm bg-linear-to-b from-[#fbfbfb] to-[#f0f0f0] pb-[2px] pl-[310px]">
        <Slot><IAdd /></Slot>
        <div className="flex w-[12.5px] justify-center"><Caret /></div>
        <Sep />
        <div className="ml-[1px] flex h-[26px] w-[185px] items-center justify-between border border-[#7a7a7a] bg-white pr-[5px] pb-px pl-[3px] text-[15px]">
          <span className="inline-block tracking-[-0.95px]">1:761,039</span>
          <Chevron />
        </div>
        <Sep />
        <Hot><ISketch /></Hot>
        <Sep />
        <Slot><IToc /></Slot>
        <Slot><ICatalog /></Slot>
        <Slot><ISearch /></Slot>
        <Slot><IToolbox /></Slot>
        <Slot><IPython /></Slot>
        <div className="-mr-[2px]"><Sep /></div>
        <Slot><IModel /></Slot>
        <div className="-mb-[2px] ml-px self-end"><Overflow /></div>
      </div>
    </div>
  );
}

function ToolRow2() {
  return (
    <div className="flex h-[33px] shrink-0 items-center">
      <div className="flex h-8 items-center bg-linear-to-b from-[#fbfbfb] to-[#f0f0f0] pl-[323px]">
        <Sep />
        <Hot><IPointer /></Hot>
        <Sep />
        <Slot><IInfo /></Slot>
        <Slot><IBolt /></Slot>
        <Slot><ICallout /></Slot>
        <Sep />
        <Slot><IMeasure /></Slot>
        <Sep />
        <Slot><IBino /></Slot>
        <Slot><IRoute /></Slot>
        <Slot><IXY /></Slot>
        <Sep />
        <Slot><ITime /></Slot>
        <Sep />
        <Slot><IViewer /></Slot>
        <Overflow />
        <div className="flex w-[18px] justify-center"><Grip /></div>
        <div className="flex w-[53px] items-center gap-[4px] pl-px text-[15px] tracking-[-0.45px]">
          <span>Editor</span>
          <Caret />
        </div>
        <Sep />
        <Slot>
          <Ic><path d="M4 2.500l9.500 6L8.500 9.500 4 13.500z" fill={G} /></Ic>
        </Slot>
        <Slot><IArrowA /></Slot>
        <Sep />
        <Slot><INode d="M2.500 13.500L13.500 3" pts={[[2.5, 13.5], [13.5, 3]]} /></Slot>
        <Slot><INode d="M3.500 13.500C3.500 8 6 4 13 3" pts={[[3.5, 13.5], [6, 7.5], [13.5, 3]]} /></Slot>
        <Slot><INode d="M1 11.500L6 2h8v11H10M6 9v6M3 12h6" pts={[[6, 2], [14, 2], [14, 12]]} /></Slot>
        <div className="flex w-[13.5px] justify-center text-[#999]"><Caret /></div>
        <Slot><IStar /></Slot>
        <Sep />
        <Slot>
          <INode d="M2 2v12h12M2 2l12 8v4M14 4v6" pts={[[2, 2], [14, 9.5], [2, 14], [14, 14]]} />
        </Slot>
        <Slot><INode d="M2 3v11M2 3l6 4M8 1v14M10 9l4 3" pts={[[2, 3], [2, 14], [14, 10], [14, 14]]} /></Slot>
        <Slot><INode d="M1 4.500h14v7H1zM8 1v14" pts={[[8, 2], [8, 14]]} /></Slot>
        <Slot><INode d="M2 14.500L14 2M3 3l3 3M10 10l4 4" pts={[[8, 8.5]]} /></Slot>
        <Slot><IRotate /></Slot>
        <Sep />
        <Slot><ITable /></Slot>
        <Slot><IGraphBox /></Slot>
        <Sep />
        <Slot><IForm /></Slot>
        <Overflow />
        <div className="flex w-[14px] justify-center pl-[3px]"><Grip /></div>
        <Slot><ILens /></Slot>
        <Slot><ILens minus /></Slot>
        <Slot><IHand /></Slot>
        <Slot><IExtent /></Slot>
        <Slot><IOne /></Slot>
        <Sep />
        <Slot><IFixed /></Slot>
        <Slot><IFixed out /></Slot>
        <Sep />
        <Slot><IBack /></Slot>
        <Slot><IFwd /></Slot>
        <div className="flex h-[26px] w-[74px] items-center justify-between border border-[#7a7a7a] bg-white pr-[5px] pb-px pl-[3px] text-[15px]">
          <span className="origin-left scale-x-85 tracking-[-0.8px]">76%</span>
          <Chevron className="w-[10px]" />
        </div>
        <Sep />
        <Slot><IDraft /></Slot>
        <Slot><IFocus /></Slot>
        <Slot><ILayoutSwap /></Slot>
        <Slot><IPages /></Slot>
        <Overflow />
      </div>
    </div>
  );
}

function ContentsPanel() {
  return (
    <div className="flex w-[374px] shrink-0 flex-col">
      <div className="flex h-[25px] items-center justify-end bg-[#d5e2f0] pr-[6px] pb-[2px]">
        <svg viewBox="0 0 10 12" className="mr-[9px] h-3 w-[10px]" fill="none" stroke="#000" strokeWidth="1.300">
          <path d="M2.500 1h5v6M2.500 1v6M.5 7.200h9M5 7v4.500" />
          <path d="M6.700 1v6" strokeWidth="1.800" />
        </svg>
        <svg viewBox="0 0 10 10" className="h-[10px] w-[10px]" fill="none" stroke="#000" strokeWidth="1.800">
          <path d="M1 1l8 8M9 1L1 9" />
        </svg>
      </div>
      <div className="h-[33px] bg-linear-to-b from-[#fdfdfd] to-[#efefef]" />
      <div className="grow border border-[#9a9ea6] bg-white" />
    </div>
  );
}

const Arrow = ({ d }: { d: string }) => (
  <svg viewBox="0 0 10 10" className="h-[10px] w-[10px] shrink-0" fill="none" stroke="#505050" strokeWidth="2.200">
    <path d={d} />
  </svg>
);

function LayoutView() {
  return (
    <div className="ml-[7px] flex w-[1509px] shrink-0 flex-col border-t-2 border-l-2 border-[#838383] bg-[#f0f0f0]">
      <div className="flex min-h-0 grow">
        <div className="flex grow flex-col">
          <div className="h-[25px] shrink-0 pt-[3px] pl-[224px]">
            <RulerH />
          </div>
          <div className="flex grow">
            <div className="w-6 shrink-0 pt-[40px] pl-[3px]">
              <RulerV />
            </div>
            <div className="flex grow border-t-2 border-l-2 border-[#838383] bg-white pt-[37px] pl-[198px]">
              <MapPage />
            </div>
          </div>
        </div>
        <div className="flex w-[20px] shrink-0 flex-col items-center border-l border-[#e2e2e2] pt-[7px] pr-[2px] pb-[6px]">
          <Arrow d="M1 8l4-5 4 5" />
          <div className="mt-[160px] h-[485px] w-[17px] bg-[#cdcdcd]" />
          <div className="grow" />
          <Arrow d="M1 2l4 5 4-5" />
        </div>
      </div>
      <div className="flex h-[23px] shrink-0 items-center pb-px pl-[4px]">
        <svg viewBox="0 0 12 12" className="h-3 w-3">
          <rect x="1" y="1" width="10" height="10" fill="#b9d27a" stroke="#333" strokeWidth="1.400" />
          <path d="M2 8l6-6h2v2L4 10H2z" fill="#f2f5d8" />
        </svg>
        <div className="ml-[5px] flex h-5 w-[21px] items-center justify-center border border-[#8cc4f0] bg-[#c4dff5]">
          <svg viewBox="0 0 10 12" className="h-3 w-[10px]" fill="#fff" stroke="#333" strokeWidth="1.300">
            <path d="M1 1h5l3 3v7H1z" />
            <path d="M3 5.500h4M3 8h4" />
          </svg>
        </div>
        <div className="ml-[3px] h-4 w-px bg-[#9a9a9a]" />
        <svg viewBox="0 0 12 12" className="ml-[10px] h-3 w-3" fill="none" stroke="#1d5796" strokeWidth="1.600">
          <path d="M1 5a5 4.500 0 0 1 8.500-2M11 7a5 4.500 0 0 1-8.500 2" />
          <path d="M11 .5V5H7zM1 11.500V7h4z" fill="#1d5796" stroke="none" />
        </svg>
        <div className="ml-[11px] flex gap-[2px]">
          <div className="h-2 w-[3px] bg-[#1f5b9e]" />
          <div className="h-2 w-[3px] bg-[#1f5b9e]" />
        </div>
        <div className="ml-[12px]"><Arrow d="M8 1L3 5l5 4" /></div>
        <div className="ml-[190px] h-[17px] w-[1002px] bg-[#cdcdcd]" />
        <div className="ml-[169px]"><Arrow d="M2 1l5 4-5 4" /></div>
      </div>
    </div>
  );
}

const SideTab = ({ icon, label, h }: { icon: React.ReactNode; label: string; h: string }) => (
  <div className={"flex flex-col items-center rounded-l-[4px] border border-r-0 border-[#a5a5a5] bg-[#f3f3f3] pt-[4px] " + h}>
    {icon}
    <div className="mt-[5px] font-['Liberation_Sans',sans-serif] text-[15px] leading-[18px] tracking-[0.3px] text-[#777] [writing-mode:vertical-rl]">{label}</div>
  </div>
);

function Tooltip() {
  const lines = [
    "Export this map to a file, such as a",
    "PNG, EPS, JPEG or PDF file. If you",
    "are in Data view, only your current",
    "map display extent will be",
    "exported. If you are in Layout",
    "view, your entire page layout will",
    "be exported.",
  ];
  return (
    <div className="absolute top-[441px] left-[183px] h-[184px] w-[258px] rounded-[2px] border border-[#767676] bg-linear-to-b from-white to-[#c9d9ef] pt-[7px] pl-[5px] text-[15px] text-[#575757] shadow-[4px_4px_3px_rgba(0,0,0,0.45)]">
      <div className="leading-5 font-bold tracking-[-0.5px]">Export Map</div>
      <div className="mt-[11px] pl-[10px]">
        {lines.map((l) => (
          <div key={l} className="leading-[18.8px] tracking-[-0.42px] whitespace-nowrap">
            {l}
          </div>
        ))}
      </div>
    </div>
  );
}

export default function App() {
  return (
    <div className="relative flex h-[1030px] w-[1920px] flex-col overflow-hidden bg-linear-to-r from-[#f0f0f0] to-[#fbfbfb] font-['Noto_Sans','Open_Sans',sans-serif] text-[#1a1a1a]">
      <TitleBar />
      <MenuBar />
      <ToolRow1 />
      <ToolRow2 />
      <div className="flex h-[879px] shrink-0">
        <ContentsPanel />
        <LayoutView />
        <div className="flex grow flex-col pt-[3px] pl-[5px]">
          <SideTab icon={<ICatalog />} label="Catalog" h="h-[89px]" />
          <SideTab icon={<ISearch />} label="Search" h="h-[84px]" />
        </div>
      </div>
      <div className="flex grow items-center bg-[#f0f0f0] pt-[2px] pl-1 text-[15px] tracking-[-0.52px]">
        <div className="w-[1600px]">Export complete</div>
        <div className="whitespace-pre">-5.49  19.54 Centimeters</div>
      </div>
      <FileMenu />
      <Tooltip />
      <div className="absolute top-[406px] left-[14px] h-[237px] w-[460px] rounded-[24px] border-[5px] border-[#ed1c24]" />
    </div>
  );
}
